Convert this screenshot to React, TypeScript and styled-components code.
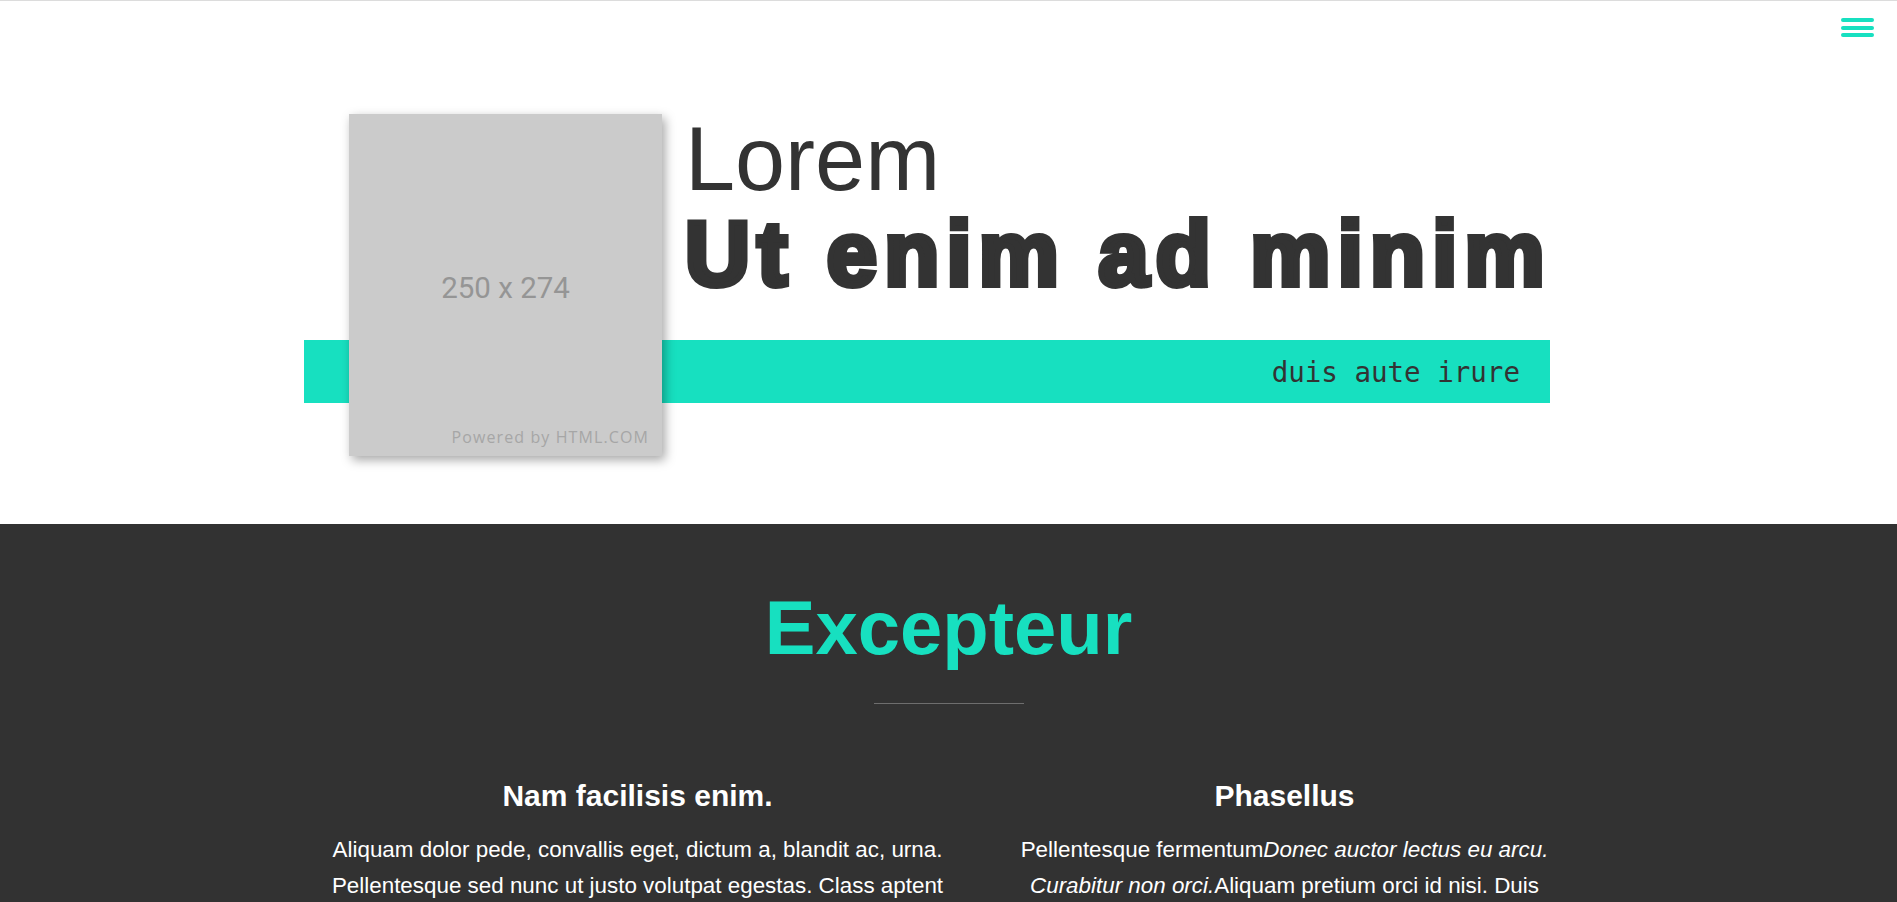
import React from "react";
import styled, { createGlobalStyle } from "styled-components";

const TEAL = "#17e0c0";
const INK = "#333333";

const GlobalStyle = createGlobalStyle`
  html, body {
    margin: 0;
    padding: 0;
    background: #ffffff;
    font-family: "Liberation Sans", Arial, sans-serif;
  }
  * { box-sizing: border-box; }
`;

const Page = styled.div`
  border-top: 1px solid #dcdcdc;
  min-height: 100vh;
  background: #323232;
`;

const MenuButton = styled.button`
  position: fixed;
  top: 18px;
  right: 23px;
  width: 33px;
  padding: 0;
  border: 0;
  background: transparent;
  display: flex;
  flex-direction: column;
  gap: 3.5px;
  cursor: pointer;
`;

const MenuBar = styled.span`
  display: block;
  height: 4px;
  border-radius: 2px;
  background: ${TEAL};
`;

const Hero = styled.header`
  background: #ffffff;
  padding: 113px 43px 121px 0;
`;

const HeroInner = styled.div`
  position: relative;
  width: 1246px;
  margin: 0 auto;
  display: flex;
  flex-direction: column;
`;

const Titles = styled.div`
  padding-left: 381px;
  color: ${INK};
`;

const Kicker = styled.h1`
  margin: 0;
  font-size: 90px;
  line-height: 90px;
  font-weight: 400;
  font-family: "Liberation Sans", Arial, sans-serif;
`;

const Headline = styled.h2`
  margin: 5px 0 0;
  font-size: 90px;
  line-height: 90px;
  font-weight: 700;
  letter-spacing: 7.3px;
  -webkit-text-stroke: 6px ${INK};
  font-family: "Liberation Sans", Arial, sans-serif;
  white-space: nowrap;
`;

const Band = styled.div`
  margin-top: 41px;
  height: 63px;
  background: ${TEAL};
  display: flex;
  align-items: center;
  justify-content: flex-end;
  padding-right: 30px;
`;

const Tagline = styled.span`
  font-family: "DejaVu Sans Mono", "Liberation Mono", monospace;
  font-size: 27.5px;
  color: ${INK};
  padding-top: 1px;
`;

const Placeholder = styled.div`
  position: absolute;
  top: 0;
  left: 45px;
  width: 313px;
  height: 342px;
  background: #cbcbcb;
  box-shadow: 3px 4px 10px rgba(0, 0, 0, 0.35);
  display: flex;
  align-items: center;
  justify-content: center;
`;

const PlaceholderSize = styled.span`
  font-family: Roboto, "Liberation Sans", sans-serif;
  font-size: 29.5px;
  color: #959595;
  margin-top: 6px;
`;

const PoweredBy = styled.span`
  position: absolute;
  right: 13px;
  bottom: 8px;
  font-family: "Open Sans", "DejaVu Sans", sans-serif;
  font-size: 16px;
  letter-spacing: 1.1px;
  color: #a6a6a6;
`;

const Features = styled.section`
  background: #323232;
  padding: 60px 0 80px;
  color: #ffffff;
`;

const SectionTitle = styled.h2`
  margin: 0;
  text-align: center;
  font-size: 76px;
  line-height: normal;
  font-weight: 700;
  color: ${TEAL};
`;

const Divider = styled.hr`
  width: 150px;
  margin: 32px auto 0;
  border: 0;
  height: 1px;
  background: #6e6e6e;
`;

const Columns = styled.div`
  margin: 75px auto 0;
  width: 1319px;
  padding-left: 25px;
  display: grid;
  grid-template-columns: 1fr 1fr;
`;

const Column = styled.article`
  padding: 0 12px;
  text-align: center;
`;

const ColumnTitle = styled.h3`
  margin: 0;
  font-size: 30px;
  line-height: normal;
  font-weight: 700;
`;

const ColumnText = styled.p`
  margin: 19px 0 0;
  font-size: 22.4px;
  line-height: 36px;
`;

export default function App() {
  return (
    <>
      <GlobalStyle />
      <Page>
        <MenuButton aria-label="Menu">
          <MenuBar />
          <MenuBar />
          <MenuBar />
        </MenuButton>
        <Hero>
          <HeroInner>
            <Titles>
              <Kicker>Lorem</Kicker>
              <Headline>Ut enim ad minim</Headline>
            </Titles>
            <Band>
              <Tagline>duis aute irure</Tagline>
            </Band>
            <Placeholder>
              <PlaceholderSize>250 x 274</PlaceholderSize>
              <PoweredBy>Powered by HTML.COM</PoweredBy>
            </Placeholder>
          </HeroInner>
        </Hero>
        <Features>
          <SectionTitle>Excepteur</SectionTitle>
          <Divider />
          <Columns>
            <Column>
              <ColumnTitle>Nam facilisis enim.</ColumnTitle>
              <ColumnText>
                Aliquam dolor pede, convallis eget, dictum a, blandit ac, urna.
                Pellentesque sed nunc ut justo volutpat egestas. Class aptent
                taciti sociosqu ad litora torquent per conubia nostra, per
                inceptos hymenaeos.
              </ColumnText>
            </Column>
            <Column>
              <ColumnTitle>Phasellus</ColumnTitle>
              <ColumnText>
                Pellentesque fermentum
                <em>Donec auctor lectus eu arcu. Curabitur non orci.</em>
                Aliquam pretium orci id nisi. Duis ullamcorper, mi non
                adipiscing venenatis, erat augue tempor tortor.
              </ColumnText>
            </Column>
          </Columns>
        </Features>
      </Page>
    </>
  );
}
